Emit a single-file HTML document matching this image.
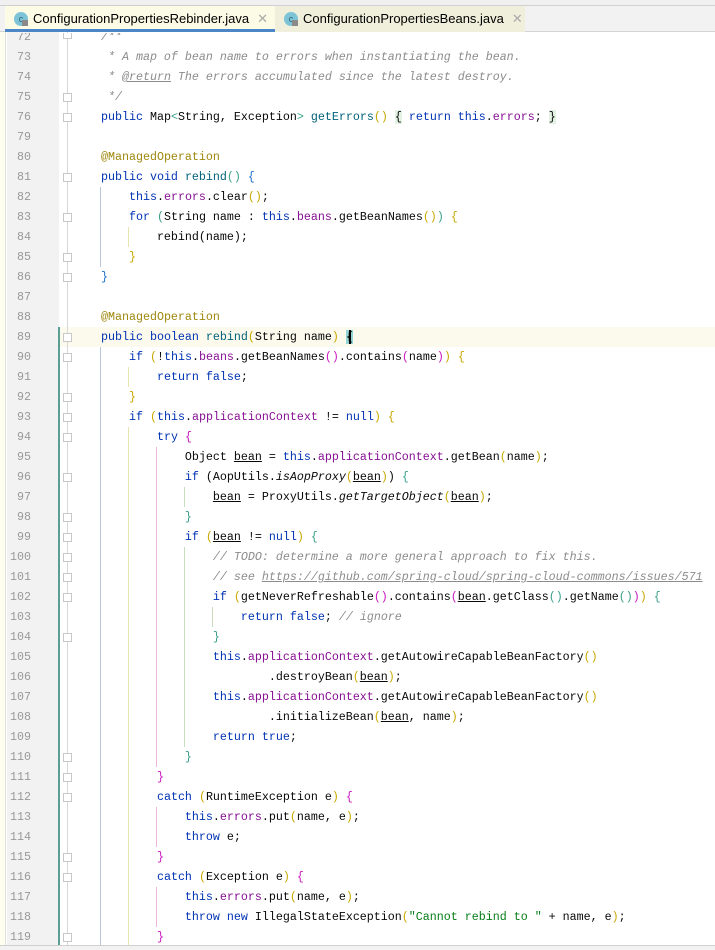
<!DOCTYPE html>
<html><head><meta charset="utf-8"><style>
*{margin:0;padding:0;box-sizing:border-box}
body{width:715px;height:950px;overflow:hidden;background:#fff;position:relative;font-family:"Liberation Mono",monospace;font-size:11.67px}
.top{position:absolute;left:0;top:0;width:715px;height:6px;background:#f0f0f0;border-bottom:1px solid #d0d0d0}
.bar{position:absolute;left:0;top:6px;width:715px;height:26px;background:#f2f2f2;border-bottom:1px solid #d4d4d4}
.tab{position:absolute;top:6px;height:26px;font-family:"Liberation Sans",sans-serif;font-size:13px;color:#000;line-height:26px;padding-left:28px}
.tab .ic{position:absolute;left:9px;top:6px;width:14px;height:14px;border-radius:50%;background:#7ec4d8;color:#2a5e70;font-size:9px;line-height:14px;text-align:center}
.tab .ic:after{content:"";position:absolute;left:8px;top:8px;width:6px;height:6px;background:#8a8a8a}
.tab .x{color:#aaa;margin-left:8px;font-size:13px}
.t1{left:5px;width:270px;background:#fbfbe6;border-bottom:3px solid #4a86c8}
.t2{left:275px;width:250px;background:#efefdc}
.strip{position:absolute;left:0;top:32px;width:6px;height:918px;background:#fffff0;border-right:1px solid #e0e0e0}
.gut{position:absolute;left:7px;top:32px;width:52px;height:913px;background:#f2f2f2}
.code{position:absolute;left:0;top:33px;width:715px;height:912px;overflow:hidden}
.bottom{position:absolute;left:0;top:945px;width:715px;height:5px;background:#f2f2f2;border-top:1px solid #d0d0d0}
.row{position:absolute;left:0;width:715px;height:20px;line-height:20px;white-space:pre;color:#080808}
.n{position:absolute;left:7px;width:24px;text-align:right;color:#999}
.t{position:absolute;left:73px}
.k{color:#0033b3}.f{color:#871094}.c{color:#8c8c8c;font-style:italic}.s{color:#067d17}.a{color:#9e880d}.m{color:#00627a}.i{font-style:italic}.u{text-decoration:underline}
.y{color:#c9a800}.p{color:#c918c0}.g{color:#3aa08a}.b{color:#1a6fc9}
.g1{position:absolute;width:1px}
.hl{position:absolute;left:59px;top:327px;width:656px;height:20px;background:#fcfaed}
.fold{position:absolute;left:67px;width:1px;background:#d8d8d8}
.fm{position:absolute;left:63px;width:9px;height:9px;border:1px solid #c8c8c8;background:#fff}
</style></head><body>
<div class="top"></div><div class="bar"></div>
<div class="tab t1"><span class="ic">c</span>ConfigurationPropertiesRebinder.java<span class="x">✕</span></div>
<div class="tab t2"><span class="ic">c</span>ConfigurationPropertiesBeans.java<span class="x">✕</span></div>
<div class="strip"></div>
<div class="gut"></div>
<div class="hl"></div>
<div style="position:absolute;left:58px;top:327px;width:2px;height:620px;background:#5a9e94"></div>
<div class="fold" style="top:32px;height:913px"></div>
<div class="g1" style="left:100px;top:187px;height:80px;background:#b8c8d8"></div>
<div class="g1" style="left:100px;top:347px;height:600px;background:#b8c8d8"></div>
<div class="g1" style="left:128px;top:227px;height:20px;background:#e8e4b0"></div>
<div class="g1" style="left:128px;top:367px;height:20px;background:#e8e4b0"></div>
<div class="g1" style="left:128px;top:427px;height:520px;background:#e8e4b0"></div>
<div class="g1" style="left:156px;top:447px;height:320px;background:#e8b8e0"></div>
<div class="g1" style="left:156px;top:807px;height:40px;background:#e8b8e0"></div>
<div class="g1" style="left:156px;top:887px;height:40px;background:#e8b8e0"></div>
<div class="g1" style="left:184px;top:487px;height:20px;background:#c8dcc0"></div>
<div class="g1" style="left:184px;top:547px;height:200px;background:#c8dcc0"></div>
<div class="g1" style="left:212px;top:607px;height:20px;background:#c8dcc0"></div>
<div class="code">
<div class="row" style="top:-6px"><span class="n">72</span><span class="t c">    /**</span></div>
<div class="row" style="top:14px"><span class="n">73</span><span class="t c">     * A map of bean name to errors when instantiating the bean.</span></div>
<div class="row" style="top:34px"><span class="n">74</span><span class="t c">     * <span class="u">@return</span> The errors accumulated since the latest destroy.</span></div>
<div class="row" style="top:54px"><span class="n">75</span><span class="t c">     */</span></div>
<div class="row" style="top:74px"><span class="n">76</span><span class="t">    <span class="k">public</span> Map<span class="g">&lt;</span>String, Exception<span class="g">&gt;</span> <span class="m">getErrors</span><span class="y">()</span> <span style="background:#e4f2e4">{</span> <span class="k">return this</span>.<span class="f">errors</span>; <span style="background:#e4f2e4">}</span></span></div>
<div class="row" style="top:94px"><span class="n">79</span></div>
<div class="row" style="top:114px"><span class="n">80</span><span class="t">    <span class="a">@ManagedOperation</span></span></div>
<div class="row" style="top:134px"><span class="n">81</span><span class="t">    <span class="k">public void</span> <span class="m">rebind</span><span class="g">()</span> <span class="b">{</span></span></div>
<div class="row" style="top:154px"><span class="n">82</span><span class="t">        <span class="k">this</span>.<span class="f">errors</span>.clear<span class="y">()</span>;</span></div>
<div class="row" style="top:174px"><span class="n">83</span><span class="t">        <span class="k">for</span> <span class="g">(</span>String name : <span class="k">this</span>.<span class="f">beans</span>.getBeanNames<span class="y">()</span><span class="g">)</span> <span class="y">{</span></span></div>
<div class="row" style="top:194px"><span class="n">84</span><span class="t">            rebind(name);</span></div>
<div class="row" style="top:214px"><span class="n">85</span><span class="t">        <span class="y">}</span></span></div>
<div class="row" style="top:234px"><span class="n">86</span><span class="t">    <span class="b">}</span></span></div>
<div class="row" style="top:254px"><span class="n">87</span></div>
<div class="row" style="top:274px"><span class="n">88</span><span class="t">    <span class="a">@ManagedOperation</span></span></div>
<div class="row" style="top:294px"><span class="n">89</span><span class="t">    <span class="k">public boolean</span> <span class="m">rebind</span><span class="y">(</span>String name<span class="y">)</span> <span style="background:#94d4d4">{</span></span></div>
<div class="row" style="top:314px"><span class="n">90</span><span class="t">        <span class="k">if</span> <span class="y">(</span>!<span class="k">this</span>.<span class="f">beans</span>.getBeanNames<span class="p">()</span>.contains<span class="p">(</span>name<span class="p">)</span><span class="y">)</span> <span class="y">{</span></span></div>
<div class="row" style="top:334px"><span class="n">91</span><span class="t">            <span class="k">return false</span>;</span></div>
<div class="row" style="top:354px"><span class="n">92</span><span class="t">        <span class="y">}</span></span></div>
<div class="row" style="top:374px"><span class="n">93</span><span class="t">        <span class="k">if</span> <span class="y">(</span><span class="k">this</span>.<span class="f">applicationContext</span> != <span class="k">null</span><span class="y">)</span> <span class="y">{</span></span></div>
<div class="row" style="top:394px"><span class="n">94</span><span class="t">            <span class="k">try</span> <span class="p">{</span></span></div>
<div class="row" style="top:414px"><span class="n">95</span><span class="t">                Object <span class="u">bean</span> = <span class="k">this</span>.<span class="f">applicationContext</span>.getBean<span class="y">(</span>name<span class="y">)</span>;</span></div>
<div class="row" style="top:434px"><span class="n">96</span><span class="t">                <span class="k">if</span> (AopUtils.<span class="i">isAopProxy</span><span class="y">(</span><span class="u">bean</span><span class="y">)</span>) <span class="g">{</span></span></div>
<div class="row" style="top:454px"><span class="n">97</span><span class="t">                    <span class="u">bean</span> = ProxyUtils.<span class="i">getTargetObject</span><span class="y">(</span><span class="u">bean</span><span class="y">)</span>;</span></div>
<div class="row" style="top:474px"><span class="n">98</span><span class="t">                <span class="g">}</span></span></div>
<div class="row" style="top:494px"><span class="n">99</span><span class="t">                <span class="k">if</span> <span class="y">(</span><span class="u">bean</span> != <span class="k">null</span><span class="y">)</span> <span class="g">{</span></span></div>
<div class="row" style="top:514px"><span class="n">100</span><span class="t c">                    // TODO: determine a more general approach to fix this.</span></div>
<div class="row" style="top:534px"><span class="n">101</span><span class="t c">                    // see <span class="u">https://github.com/spring-cloud/spring-cloud-commons/issues/571</span></span></div>
<div class="row" style="top:554px"><span class="n">102</span><span class="t">                    <span class="k">if</span> <span class="y">(</span>getNeverRefreshable<span class="p">()</span>.contains<span class="p">(</span><span class="u">bean</span>.getClass<span class="g">()</span>.getName<span class="g">()</span><span class="p">)</span><span class="y">)</span> <span class="g">{</span></span></div>
<div class="row" style="top:574px"><span class="n">103</span><span class="t">                        <span class="k">return false</span>; <span class="c">// ignore</span></span></div>
<div class="row" style="top:594px"><span class="n">104</span><span class="t">                    <span class="g">}</span></span></div>
<div class="row" style="top:614px"><span class="n">105</span><span class="t">                    <span class="k">this</span>.<span class="f">applicationContext</span>.getAutowireCapableBeanFactory<span class="y">()</span></span></div>
<div class="row" style="top:634px"><span class="n">106</span><span class="t">                            .destroyBean<span class="y">(</span><span class="u">bean</span><span class="y">)</span>;</span></div>
<div class="row" style="top:654px"><span class="n">107</span><span class="t">                    <span class="k">this</span>.<span class="f">applicationContext</span>.getAutowireCapableBeanFactory<span class="y">()</span></span></div>
<div class="row" style="top:674px"><span class="n">108</span><span class="t">                            .initializeBean<span class="y">(</span><span class="u">bean</span>, name<span class="y">)</span>;</span></div>
<div class="row" style="top:694px"><span class="n">109</span><span class="t">                    <span class="k">return true</span>;</span></div>
<div class="row" style="top:714px"><span class="n">110</span><span class="t">                <span class="g">}</span></span></div>
<div class="row" style="top:734px"><span class="n">111</span><span class="t">            <span class="p">}</span></span></div>
<div class="row" style="top:754px"><span class="n">112</span><span class="t">            <span class="k">catch</span> <span class="y">(</span>RuntimeException e<span class="y">)</span> <span class="p">{</span></span></div>
<div class="row" style="top:774px"><span class="n">113</span><span class="t">                <span class="k">this</span>.<span class="f">errors</span>.put<span class="y">(</span>name, e<span class="y">)</span>;</span></div>
<div class="row" style="top:794px"><span class="n">114</span><span class="t">                <span class="k">throw</span> e;</span></div>
<div class="row" style="top:814px"><span class="n">115</span><span class="t">            <span class="p">}</span></span></div>
<div class="row" style="top:834px"><span class="n">116</span><span class="t">            <span class="k">catch</span> <span class="y">(</span>Exception e<span class="y">)</span> <span class="p">{</span></span></div>
<div class="row" style="top:854px"><span class="n">117</span><span class="t">                <span class="k">this</span>.<span class="f">errors</span>.put<span class="y">(</span>name, e<span class="y">)</span>;</span></div>
<div class="row" style="top:874px"><span class="n">118</span><span class="t">                <span class="k">throw new</span> IllegalStateException<span class="y">(</span><span class="s">"Cannot rebind to "</span> + name, e<span class="y">)</span>;</span></div>
<div class="row" style="top:894px"><span class="n">119</span><span class="t">            <span class="p">}</span></span></div>
</div>
<div class="fm" style="top:33px;height:6px;border-top:none"></div>
<div class="fm" style="top:93px"></div>
<div class="fm" style="top:113px"></div>
<div class="fm" style="top:173px"></div>
<div class="fm" style="top:213px"></div>
<div class="fm" style="top:253px"></div>
<div class="fm" style="top:273px"></div>
<div class="fm" style="top:333px"></div>
<div class="fm" style="top:353px"></div>
<div class="fm" style="top:393px"></div>
<div class="fm" style="top:413px"></div>
<div class="fm" style="top:433px"></div>
<div class="fm" style="top:473px"></div>
<div class="fm" style="top:513px"></div>
<div class="fm" style="top:533px"></div>
<div class="fm" style="top:553px"></div>
<div class="fm" style="top:573px"></div>
<div class="fm" style="top:593px"></div>
<div class="fm" style="top:633px"></div>
<div class="fm" style="top:753px"></div>
<div class="fm" style="top:773px"></div>
<div class="fm" style="top:793px"></div>
<div class="fm" style="top:853px"></div>
<div class="fm" style="top:873px"></div>
<div class="fm" style="top:933px"></div>
<div style="position:absolute;left:349px;top:330px;width:2px;height:14px;background:#000"></div>
<div class="bottom"></div>
</body></html>
